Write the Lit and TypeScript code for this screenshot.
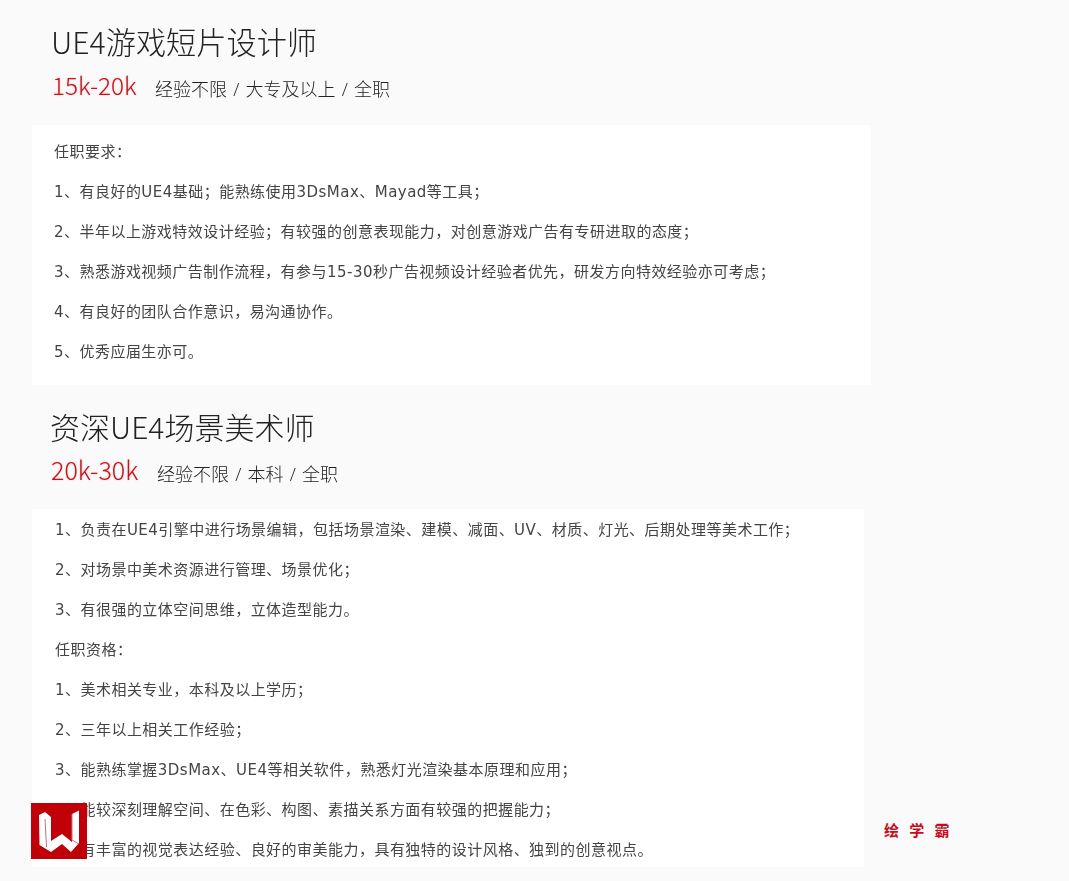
import { LitElement, html, css } from "lit";
import { customElement } from "lit/decorators.js";

const jobs = [
  {
    title: "UE4游戏短片设计师", salary: "15k-20k", meta: "经验不限 / 大专及以上 / 全职", cls: "one",
    lines: ["任职要求:", "1、有良好的UE4基础;能熟练使用3DsMax、Mayad等工具;", "2、半年以上游戏特效设计经验;有较强的创意表现能力,对创意游戏广告有专研进取的态度;", "3、熟悉游戏视频广告制作流程,有参与15-30秒广告视频设计经验者优先,研发方向特效经验亦可考虑;", "4、有良好的团队合作意识,易沟通协作。", "5、优秀应届生亦可。"],
  },
  {
    title: "资深UE4场景美术师", salary: "20k-30k", meta: "经验不限 / 本科 / 全职", cls: "two",
    lines: ["1、负责在UE4引擎中进行场景编辑,包括场景渲染、建模、减面、UV、材质、灯光、后期处理等美术工作;", "2、对场景中美术资源进行管理、场景优化;", "3、有很强的立体空间思维,立体造型能力。", "任职资格:", "1、美术相关专业,本科及以上学历;", "2、三年以上相关工作经验;", "3、能熟练掌握3DsMax、UE4等相关软件,熟悉灯光渲染基本原理和应用;", "4、能较深刻理解空间、在色彩、构图、素描关系方面有较强的把握能力;", "5、有丰富的视觉表达经验、良好的审美能力,具有独特的设计风格、独到的创意视点。"],
  },
];

// The source data is written with ASCII separators; the page shows full-width ones.
const fullWidth = (s: string) =>
  s.replace(/;/g, "\uFF1B").replace(/,/g, "\uFF0C").replace(/:/g, "\uFF1A");

@customElement("app-root")
export class AppRoot extends LitElement {
  static styles = css`
    :host { display: block; position: relative; width: 1069px; height: 881px; overflow: hidden; background: #fafafa; font-family: "Open Sans", "Noto Sans CJK SC", sans-serif; color: #333; }
    .job { display: flex; flex-direction: column; box-sizing: border-box; filter: blur(0.35px); }
    .job.one { padding: 19px 0 0 32px; height: 385px; width: 871px; }
    .job.two { padding: 19px 0 0 32px; width: 864px; }
    .head { padding-left: 19px; height: 106px; box-sizing: border-box; }
    .two .head { padding-left: 18px; height: 105px; }
    h2 { margin: 0; font-family: "Noto Sans CJK SC", sans-serif; font-size: 30.2px; line-height: 44px; font-weight: 300; color: #222; white-space: nowrap; }
    .two h2 { font-size: 30px; }
    .sub { display: flex; align-items: baseline; margin: 4px 0 0 1px; line-height: 36px; white-space: nowrap; }
    .two .sub { margin-top: 3px; margin-left: 1px; }
    .salary { font-family: "Noto Sans CJK SC", sans-serif; font-weight: 300; font-size: 24.3px; color: #c4141c; width: 103px; text-shadow: 0 0 2px rgba(220, 30, 40, 0.3); }
    .two .salary { font-size: 25px; width: 106px; }
    .meta { font-family: "Open Sans", "Noto Sans CJK SC", sans-serif; font-size: 18px; font-weight: 300; color: #222; word-spacing: 1.5px; position: relative; top: 1px; }
    .card { background: #fff; padding: 7px 0 0 22px; display: flex; flex-direction: column; flex: 1; }
    .two .card { height: 358px; box-sizing: border-box; flex: none; padding: 1px 0 0 23px; }
    .card p { margin: 0; font-family: "DejaVu Sans", "Noto Sans CJK SC", sans-serif; font-size: 15px; letter-spacing: 0.47px; line-height: 40px; height: 40px; flex: none; white-space: nowrap; color: #444; }
    .logo { position: absolute; left: 31px; top: 803px; width: 56px; height: 56px; }
    .brand { position: absolute; left: 884px; top: 820px; font-family: "Noto Sans CJK SC", sans-serif; font-size: 15px; line-height: 20px; font-weight: 700; color: #c40d1c; letter-spacing: 10.3px; white-space: nowrap; }
  `;
  render() {
    return html`
      ${jobs.map((j) => html`
        <section class="job ${j.cls}">
          <div class="head">
            <h2>${j.title}</h2>
            <div class="sub"><span class="salary">${j.salary}</span><span class="meta">${j.meta}</span></div>
          </div>
          <div class="card">${j.lines.map((l) => html`<p>${fullWidth(l)}</p>`)}</div>
        </section>`)}
      <svg class="logo" viewBox="0 0 56 56" aria-hidden="true">
        <rect width="56" height="56" fill="#c00008"></rect>
        <path d="M8 12 L14 9 L20 14 V38 L31 31 L41 39 V11 L48 7.5 V40 L40 49 L31 41 L20 49 L8.5 42 Z" fill="#fff"></path>
        <path d="M14 16 L15.5 44 M41 11 V37 L48 41" fill="none" stroke="#c87078" stroke-width="1"></path>
      </svg>
      <div class="brand">绘学霸</div>
    `;
  }
}
